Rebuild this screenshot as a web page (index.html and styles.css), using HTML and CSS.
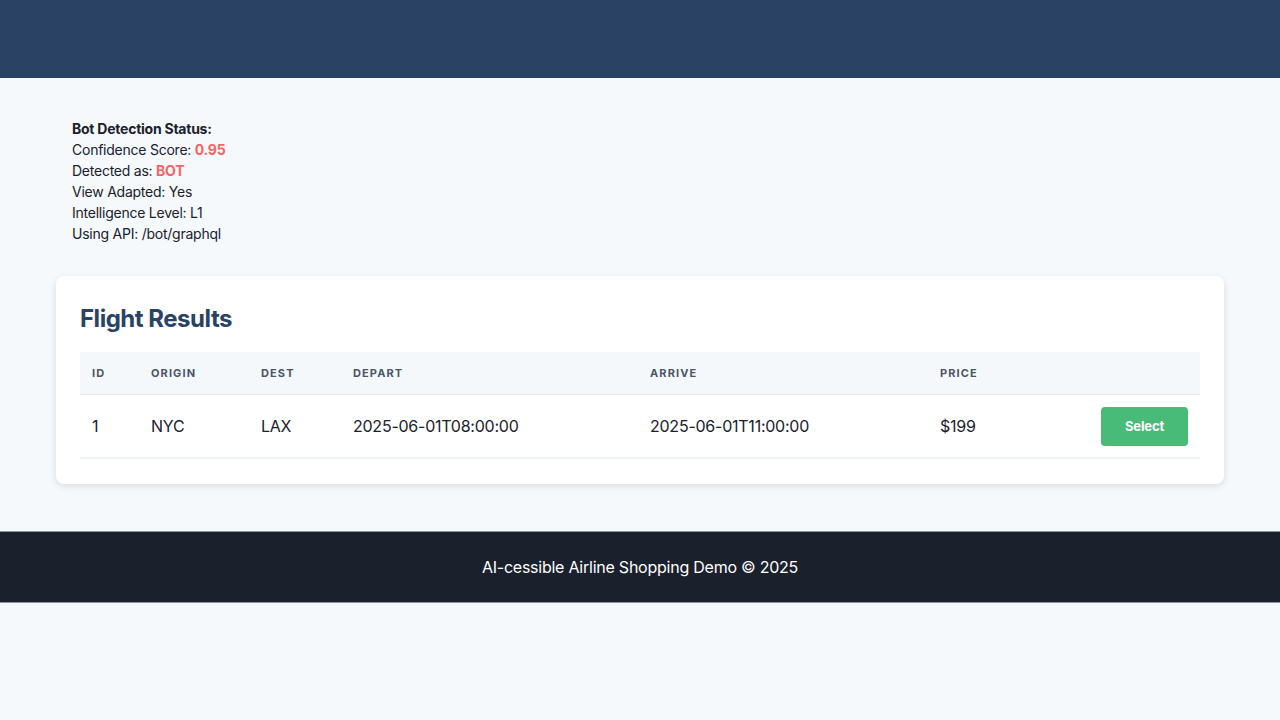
FILE: index.html
```html
<!DOCTYPE html>
<html lang="en">
<head>
<meta charset="utf-8">
<title>AI-cessible Airline Shopping Demo</title>
<link rel="stylesheet" href="styles.css">
</head>
<body>
<header class="topbar"></header>
<main class="main">
  <section class="status">
    <div class="status-title">Bot Detection Status:</div>
    <div>Confidence Score: <span class="alert">0.95</span></div>
    <div>Detected as: <span class="alert">BOT</span></div>
    <div>View Adapted: Yes</div>
    <div>Intelligence Level: L1</div>
    <div>Using API: /bot/graphql</div>
  </section>
  <section class="card">
    <h2 class="card-title">Flight Results</h2>
    <table class="flights">
      <thead>
        <tr>
          <th class="c-id">ID</th>
          <th class="c-origin">Origin</th>
          <th class="c-dest">Dest</th>
          <th class="c-depart">Depart</th>
          <th class="c-arrive">Arrive</th>
          <th class="c-price">Price</th>
          <th class="c-action"></th>
        </tr>
      </thead>
      <tbody>
        <tr>
          <td>1</td>
          <td>NYC</td>
          <td>LAX</td>
          <td>2025-06-01T08:00:00</td>
          <td>2025-06-01T11:00:00</td>
          <td>$199</td>
          <td class="action"><button class="btn-select">Select</button></td>
        </tr>
      </tbody>
    </table>
  </section>
</main>
<footer class="footer">AI-cessible Airline Shopping Demo © 2025</footer>
</body>
</html>
```
FILE: styles.css
```css
* { box-sizing: border-box; }
html, body { margin: 0; padding: 0; }
body {
  background: #f5f9fc;
  font-family: Inter, "Noto Sans", sans-serif;
  color: #1a202c;
  letter-spacing: -0.015em;
}
.topbar {
  height: 78px;
  background: #2a4365;
}
.main {
  max-width: 1200px;
  margin: 0 auto;
  padding: 24px 16px 47px;
}
.status {
  padding: 16px;
  margin-bottom: 16px;
  font-size: 14px;
  line-height: 21px;
  color: #1a202c;
}
.status-title { font-weight: 700; }
.alert { color: #f56565; font-weight: 700; }
.card {
  background: #fff;
  border-radius: 8px;
  box-shadow: 0 2px 6px rgba(0,0,0,0.12);
  padding: 24px 24px 25px;
}
.card-title {
  margin: 0 0 14px;
  font-size: 24px;
  line-height: 38px;
  font-weight: 700;
  color: #2a4365;
  letter-spacing: -0.02em;
}
.flights {
  width: 100%;
  border-collapse: collapse;
}
.flights th {
  background: #f5f8fb;
  height: 42px;
  padding: 1px 12px 0;
  text-align: left;
  font-size: 11px;
  font-weight: 700;
  letter-spacing: 0.1em;
  text-transform: uppercase;
  color: #4a5568;
  border-bottom: 1px solid #e2e8f0;
}
.flights td {
  height: 64px;
  padding: 1px 12px 0;
  font-size: 16px;
  color: #1a202c;
  border-bottom: 2px solid #edf2f7;
}
.c-id { width: 59px; }
.c-origin { width: 110px; }
.c-dest { width: 92px; }
.c-depart { width: 297px; }
.c-arrive { width: 290px; }
.c-price { width: 150px; }
.action { text-align: right; }
.btn-select {
  width: 87px;
  height: 39px;
  border: none;
  border-radius: 4px;
  background: #48bb78;
  color: #fff;
  font-family: Inter, "Noto Sans", sans-serif;
  font-size: 13px;
  font-weight: 700;
  letter-spacing: -0.01em;
  cursor: pointer;
}
.footer {
  background: #1a202c;
  border-top: 1px solid #8a94a3;
  border-bottom: 1px solid #8a94a3;
  height: 72px;
  display: flex;
  align-items: center;
  justify-content: center;
  color: #fff;
  font-size: 16px;
}
```
